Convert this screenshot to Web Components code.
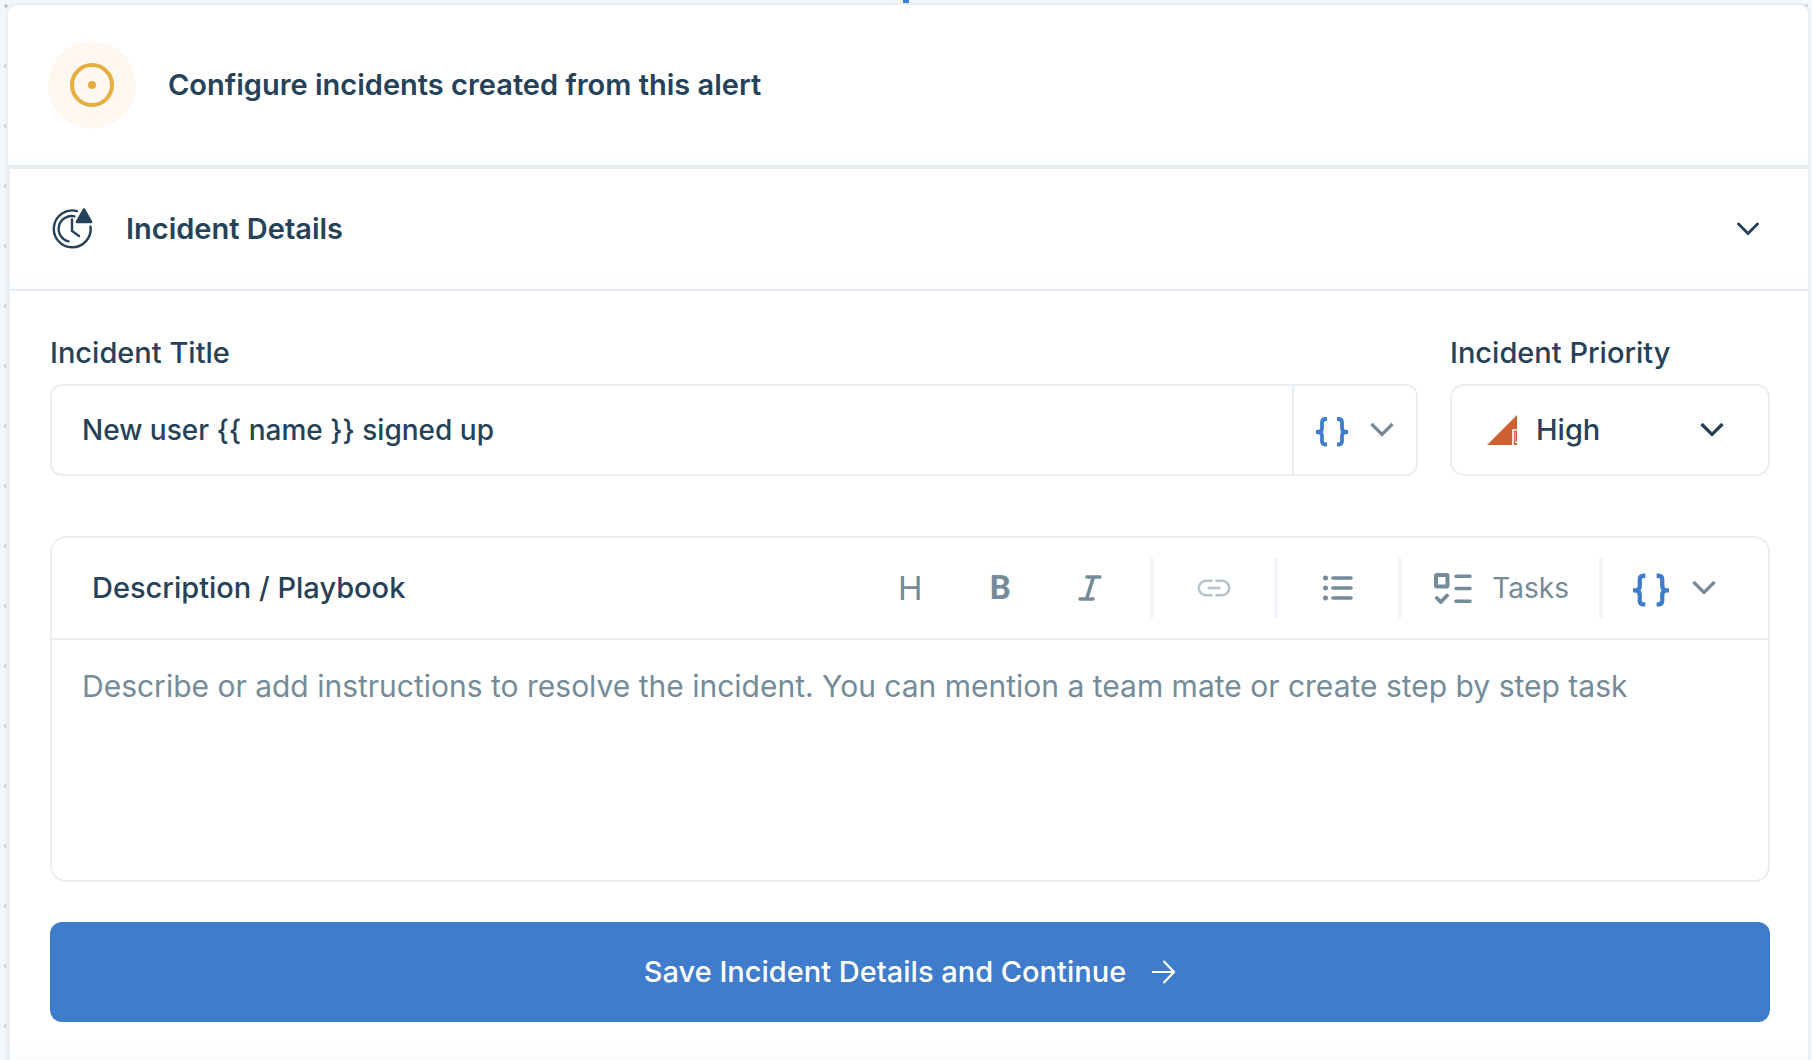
<!DOCTYPE html>
<html lang="en">
<head>
<meta charset="utf-8">
<meta name="viewport" content="width=device-width, initial-scale=1">
<title>Incident configuration</title>
<style>
    :root {
        --ink: #264259;
        --muted: #748b99;
        --blue: #407ccc;
        --line: #e9eef3;
    }
    * {
        box-sizing: border-box;
    }
    body {
        margin: 0;
        min-height: 100vh;
        display: flex;
        background-color: #f3f7fa;
        background-image: radial-gradient(circle at 6px 6px, #c6ced3 2px, transparent 2px);
        background-size: 60px 60px;
        font-family: Inter, "Liberation Sans", sans-serif;
        font-size: 29px;
        font-weight: 500;
        line-height: 36px;
        color: var(--ink);
    }
</style>
</head>
<body>
<incident-builder>
    <alert-header>Configure incidents created from this alert</alert-header>
    <details-section heading="Incident Details">
        <field-row>
            <title-field label="Incident Title" value="New user {{ name }} signed up"></title-field>
            <priority-select label="Incident Priority"></priority-select>
        </field-row>
        <playbook-editor
            heading="Description / Playbook"
            placeholder="Describe or add instructions to resolve the incident. You can mention a team mate or create step by step task"></playbook-editor>
        <save-button>Save Incident Details and Continue</save-button>
    </details-section>
</incident-builder>

<script>
(function() {
    // name: [width, height, markup]
    const ICONS = {
        target: [44, 44, '<circle cx="22" cy="22" r="20" stroke-width="4"/><circle cx="22" cy="22" r="4" fill="currentColor" stroke="none"/>'],
        clock: [42, 42, '<g stroke-width="2.4" stroke-linecap="round"><path d="M25 3.1A18.4 18.4 0 1 0 38.5 18.6"/><path d="M22.5 8.4A12.8 12.8 0 0 0 16.5 33.4"/><path d="M20 11.5V23l7 5"/></g><path d="M32 1.500l7 12.500H25z" fill="currentColor" stroke-width="2.6" stroke-linejoin="round"/>'],
        chevron: [24, 16, '<path d="M1.500 2L12 12.500 22.500 2" stroke-width="3.3"/>'],
        'chevron-thin': [24, 16, '<path d="M2.500 3L12 12.500 21.500 3" stroke-width="3" stroke-linecap="round"/>'],
        braces: [32, 34, '<g stroke-width="3.8"><path d="M11 6H9.500Q6 6 6 9.500V15Q6 19 2 19H0H2Q6 19 6 23V28Q6 31.500 9.500 31.500H11"/><path d="M21 6H22.500Q26 6 26 9.500V15Q26 19 30 19H32H30Q26 19 26 23V28Q26 31.500 22.500 31.500H21"/></g>'],
        priority: [30, 30, '<path d="M0 30L30 0V30z" fill="currentColor" stroke="none"/><path d="M26 30V15H30M28 27.200H30" stroke="#fff" stroke-width="1.6"/><path d="M28.200 17V26" stroke="#fff" stroke-width=".6"/>'],
        italic: [24, 26, '<path d="M9 2H22M2 24H15M15.500 2L8.500 24" stroke-width="3.6" stroke-linecap="round"/>'],
        link: [34, 18, '<path d="M15.500 1.800H9A7.200 7.200 0 0 0 9 16.200H15.500M18.500 1.800H25A7.200 7.200 0 0 1 25 16.200H18.500M10.500 9H23.500" stroke-width="2.6"/>'],
        list: [30, 26, '<path d="M10 3H28M10 13H28M10 23H28" stroke-width="3.6" stroke-linecap="round"/><g fill="currentColor" stroke="none"><circle cx="2.500" cy="3" r="2.500"/><circle cx="2.500" cy="13" r="2.500"/><circle cx="2.500" cy="23" r="2.500"/></g>'],
        tasks: [38, 32, '<rect x="2" y="3" width="11.500" height="11.500" rx="1" stroke-width="4"/><path d="M22 4.300H36M22 16.500H36M22 29.300H36" stroke-width="3.6" stroke-linecap="round"/><path d="M2.800 26L6.800 30 13 23.500" stroke-width="3.8" stroke-linecap="round"/>'],
        arrow: [24, 24, '<path d="M0 12H22M11.500 1L22 12 11.500 23" stroke-width="2.2"/>']
    };

    // shared base: clones the class template into an open root
    class BaseElement extends HTMLElement {
        constructor() {
            super();
            const tmpl = document.createElement('template');
            tmpl.innerHTML = `<style>
                * { box-sizing: border-box; }
                :host { display: block; }
                button, input, select, textarea { font: inherit; color: inherit; background: none; border: 0; margin: 0; padding: 0; outline: 0; }
                button, select { cursor: pointer; }
                button { display: flex; align-items: center; justify-content: center; }
            </style>` + this.markup();
            this.attachShadow({ mode: 'open' }).appendChild(tmpl.content.cloneNode(true));
        }
    }

    class UiIcon extends HTMLElement {
        connectedCallback() {
            const [w, h, body] = ICONS[this.getAttribute('name')];
            const width = this.getAttribute('width') || w;
            const root = this.shadowRoot || this.attachShadow({ mode: 'open' });
            root.innerHTML = `<style>:host { display: block; flex: none; } svg { display: block; }</style>
                <svg width="${width}" viewBox="0 0 ${w} ${h}" fill="none" stroke="currentColor" aria-hidden="true">${body}</svg>`;
        }
    }

    class IncidentBuilder extends BaseElement {
        markup() {
            return `<style>
                :host { flex: 1; display: flex; flex-direction: column; min-width: 0; }
                .connector { width: 6px; height: 3px; margin: 0 auto; background: var(--blue); }
                .card { flex: 1; margin: 0 2px 0 6px; border: 2px solid var(--line); border-bottom: 0; border-radius: 12px 12px 0 0; background: #fff; display: flex; flex-direction: column; }
            </style>
            <div class="connector"></div>
            <main class="card"><slot></slot></main>`;
        }
    }

    class AlertHeader extends BaseElement {
        markup() {
            return `<style>
                header { display: flex; align-items: center; gap: 32px; padding: 36px 40px; border-radius: 10px 10px 0 0; background: linear-gradient(to top, #fafcfe, #fff 16px); }
                .badge { display: grid; place-items: center; width: 88px; height: 88px; border-radius: 50%; background: #fef8f0; color: #e6ad40; }
                h1 { margin: 0; font-size: 29px; font-weight: 600; }
            </style>
            <header>
                <div class="badge"><ui-icon name="target"></ui-icon></div>
                <h1><slot></slot></h1>
            </header>`;
        }
    }

    class DetailsSection extends BaseElement {
        markup() {
            return `<style>
                :host { flex: 1; border-top: 4px solid #e6ebf1; border-left: 2px solid var(--line); background: linear-gradient(to top, #fafcfe, #fff 20px); }
                h2 { margin: 0; font-size: 29px; font-weight: 600; border-bottom: 2px solid #e6ebf3; background: linear-gradient(to top, #fafcfe, #fff 16px); }
                .toggle { width: 100%; height: 120px; padding: 0 48px 0 42px; gap: 32px; }
                .toggle span { flex: 1; text-align: left; }
                .body { display: flex; flex-direction: column; gap: 40px; padding: 44px 38px 38px 40px; }
            </style>
            <h2><button class="toggle" type="button" aria-expanded="true">
                <ui-icon name="clock"></ui-icon><span></span><ui-icon name="chevron-thin"></ui-icon>
            </button></h2>
            <div class="body"><slot></slot></div>`;
        }
        connectedCallback() {
            this._toggle = this.shadowRoot.querySelector('.toggle');
            this._body = this.shadowRoot.querySelector('.body');
            this._toggle.querySelector('span').textContent = this.getAttribute('heading');
            this._toggle.addEventListener('click', this._onToggle.bind(this));
        }
        _onToggle() {
            const open = this._toggle.getAttribute('aria-expanded') === 'true';
            this._toggle.setAttribute('aria-expanded', String(!open));
            this._body.style.display = open ? 'none' : '';
        }
    }

    class FieldRow extends BaseElement {
        markup() {
            return `<style>
                :host { display: flex; gap: 32px; margin-bottom: 20px; }
            </style>
            <slot></slot>`;
        }
    }

    class TitleField extends BaseElement {
        markup() {
            return `<style>
                :host { flex: 1; min-width: 0; }
                label { display: block; margin-bottom: 13px; }
                .box { display: flex; height: 92px; border: 2px solid var(--line); border-radius: 12px; }
                input { flex: 1; min-width: 0; padding: 0 30px; font-size: 28px; }
                button { width: 124px; gap: 22px; border-left: 2px solid var(--line); color: var(--muted); }
                .vars { color: var(--blue); }
            </style>
            <label for="title"></label>
            <div class="box">
                <input id="title" type="text">
                <button type="button" aria-label="Insert variable">
                    <ui-icon class="vars" name="braces"></ui-icon><ui-icon name="chevron"></ui-icon>
                </button>
            </div>`;
        }
        connectedCallback() {
            this.shadowRoot.querySelector('label').textContent = this.getAttribute('label');
            this.shadowRoot.querySelector('input').value = this.getAttribute('value');
        }
    }

    class PrioritySelect extends BaseElement {
        markup() {
            return `<style>
                :host { flex: 0 0 320px; }
                label { display: block; margin-bottom: 13px; }
                /* icon, select and chevron share one grid row; the select spans it all */
                .box { display: grid; grid-template-columns: 30px 1fr 24px; align-items: center; height: 92px; padding: 0 44px 0 35px; border: 2px solid var(--line); border-radius: 14px; }
                .level { grid-area: 1 / 1; color: #cd5f33; }
                .arrow { grid-area: 1 / 3; pointer-events: none; }
                select { grid-area: 1 / 1 / 2 / 4; appearance: none; height: 88px; padding-left: 49px; }
            </style>
            <label for="priority"></label>
            <div class="box">
                <ui-icon class="level" name="priority"></ui-icon>
                <select id="priority"><option>High</option></select>
                <ui-icon class="arrow" name="chevron"></ui-icon>
            </div>`;
        }
        connectedCallback() {
            this.shadowRoot.querySelector('label').textContent = this.getAttribute('label');
        }
    }

    class PlaybookEditor extends BaseElement {
        markup() {
            return `<style>
                :host { border: 2px solid var(--line); border-radius: 16px; }
                .bar { display: flex; align-items: center; height: 102px; padding: 0 22px 0 40px; border-bottom: 2px solid var(--line); color: var(--muted); }
                label { flex: 1; color: var(--ink); }
                .marks { display: flex; margin-right: 15px; }
                .marks button { width: 90px; }
                .bar button { height: 60px; }
                .group { border-left: 4px solid #f2f6fa; }
                .single { width: 124px; }
                .heading { font-size: 33px; font-weight: 400; }
                .bold { font-family: Roboto, sans-serif; font-size: 33px; font-weight: 700; }
                .tasks { padding: 0 30px 0 32px; gap: 20px; font-size: 28px; font-weight: 400; }
                .vars { padding: 0 30px; gap: 23px; }
                .vars ui-icon:first-child { color: var(--blue); }
                :disabled ui-icon { opacity: .5; }
                textarea { display: block; width: 100%; height: 240px; padding: 28px 30px; resize: none; font-size: 30px; font-weight: 400; }
                textarea::placeholder { color: var(--muted); opacity: 1; }
            </style>
            <div class="bar">
                <label for="text"></label>
                <div class="marks">
                    <button class="heading" type="button" aria-label="Heading">H</button>
                    <button class="bold" type="button" aria-label="Bold">B</button>
                    <button type="button" aria-label="Italic"><ui-icon name="italic"></ui-icon></button>
                </div>
                <button class="group single" type="button" aria-label="Link" disabled><ui-icon name="link"></ui-icon></button>
                <button class="group single" type="button" aria-label="List"><ui-icon name="list"></ui-icon></button>
                <button class="group tasks" type="button"><ui-icon name="tasks"></ui-icon>Tasks</button>
                <button class="group vars" type="button" aria-label="Insert variable"><ui-icon name="braces" width="36"></ui-icon><ui-icon name="chevron"></ui-icon></button>
            </div>
            <textarea id="text"></textarea>`;
        }
        connectedCallback() {
            this.shadowRoot.querySelector('label').textContent = this.getAttribute('heading');
            this.shadowRoot.querySelector('textarea').placeholder = this.getAttribute('placeholder');
        }
    }

    class SaveButton extends BaseElement {
        markup() {
            return `<style>
                button { width: 100%; height: 100px; gap: 26px; border-radius: 12px; background: var(--blue); color: #fff; }
            </style>
            <button type="button"><slot></slot><ui-icon name="arrow"></ui-icon></button>`;
        }
    }

    customElements.define('ui-icon', UiIcon);
    customElements.define('incident-builder', IncidentBuilder);
    customElements.define('alert-header', AlertHeader);
    customElements.define('details-section', DetailsSection);
    customElements.define('field-row', FieldRow);
    customElements.define('title-field', TitleField);
    customElements.define('priority-select', PrioritySelect);
    customElements.define('playbook-editor', PlaybookEditor);
    customElements.define('save-button', SaveButton);
})();
</script>
</body>
</html>
